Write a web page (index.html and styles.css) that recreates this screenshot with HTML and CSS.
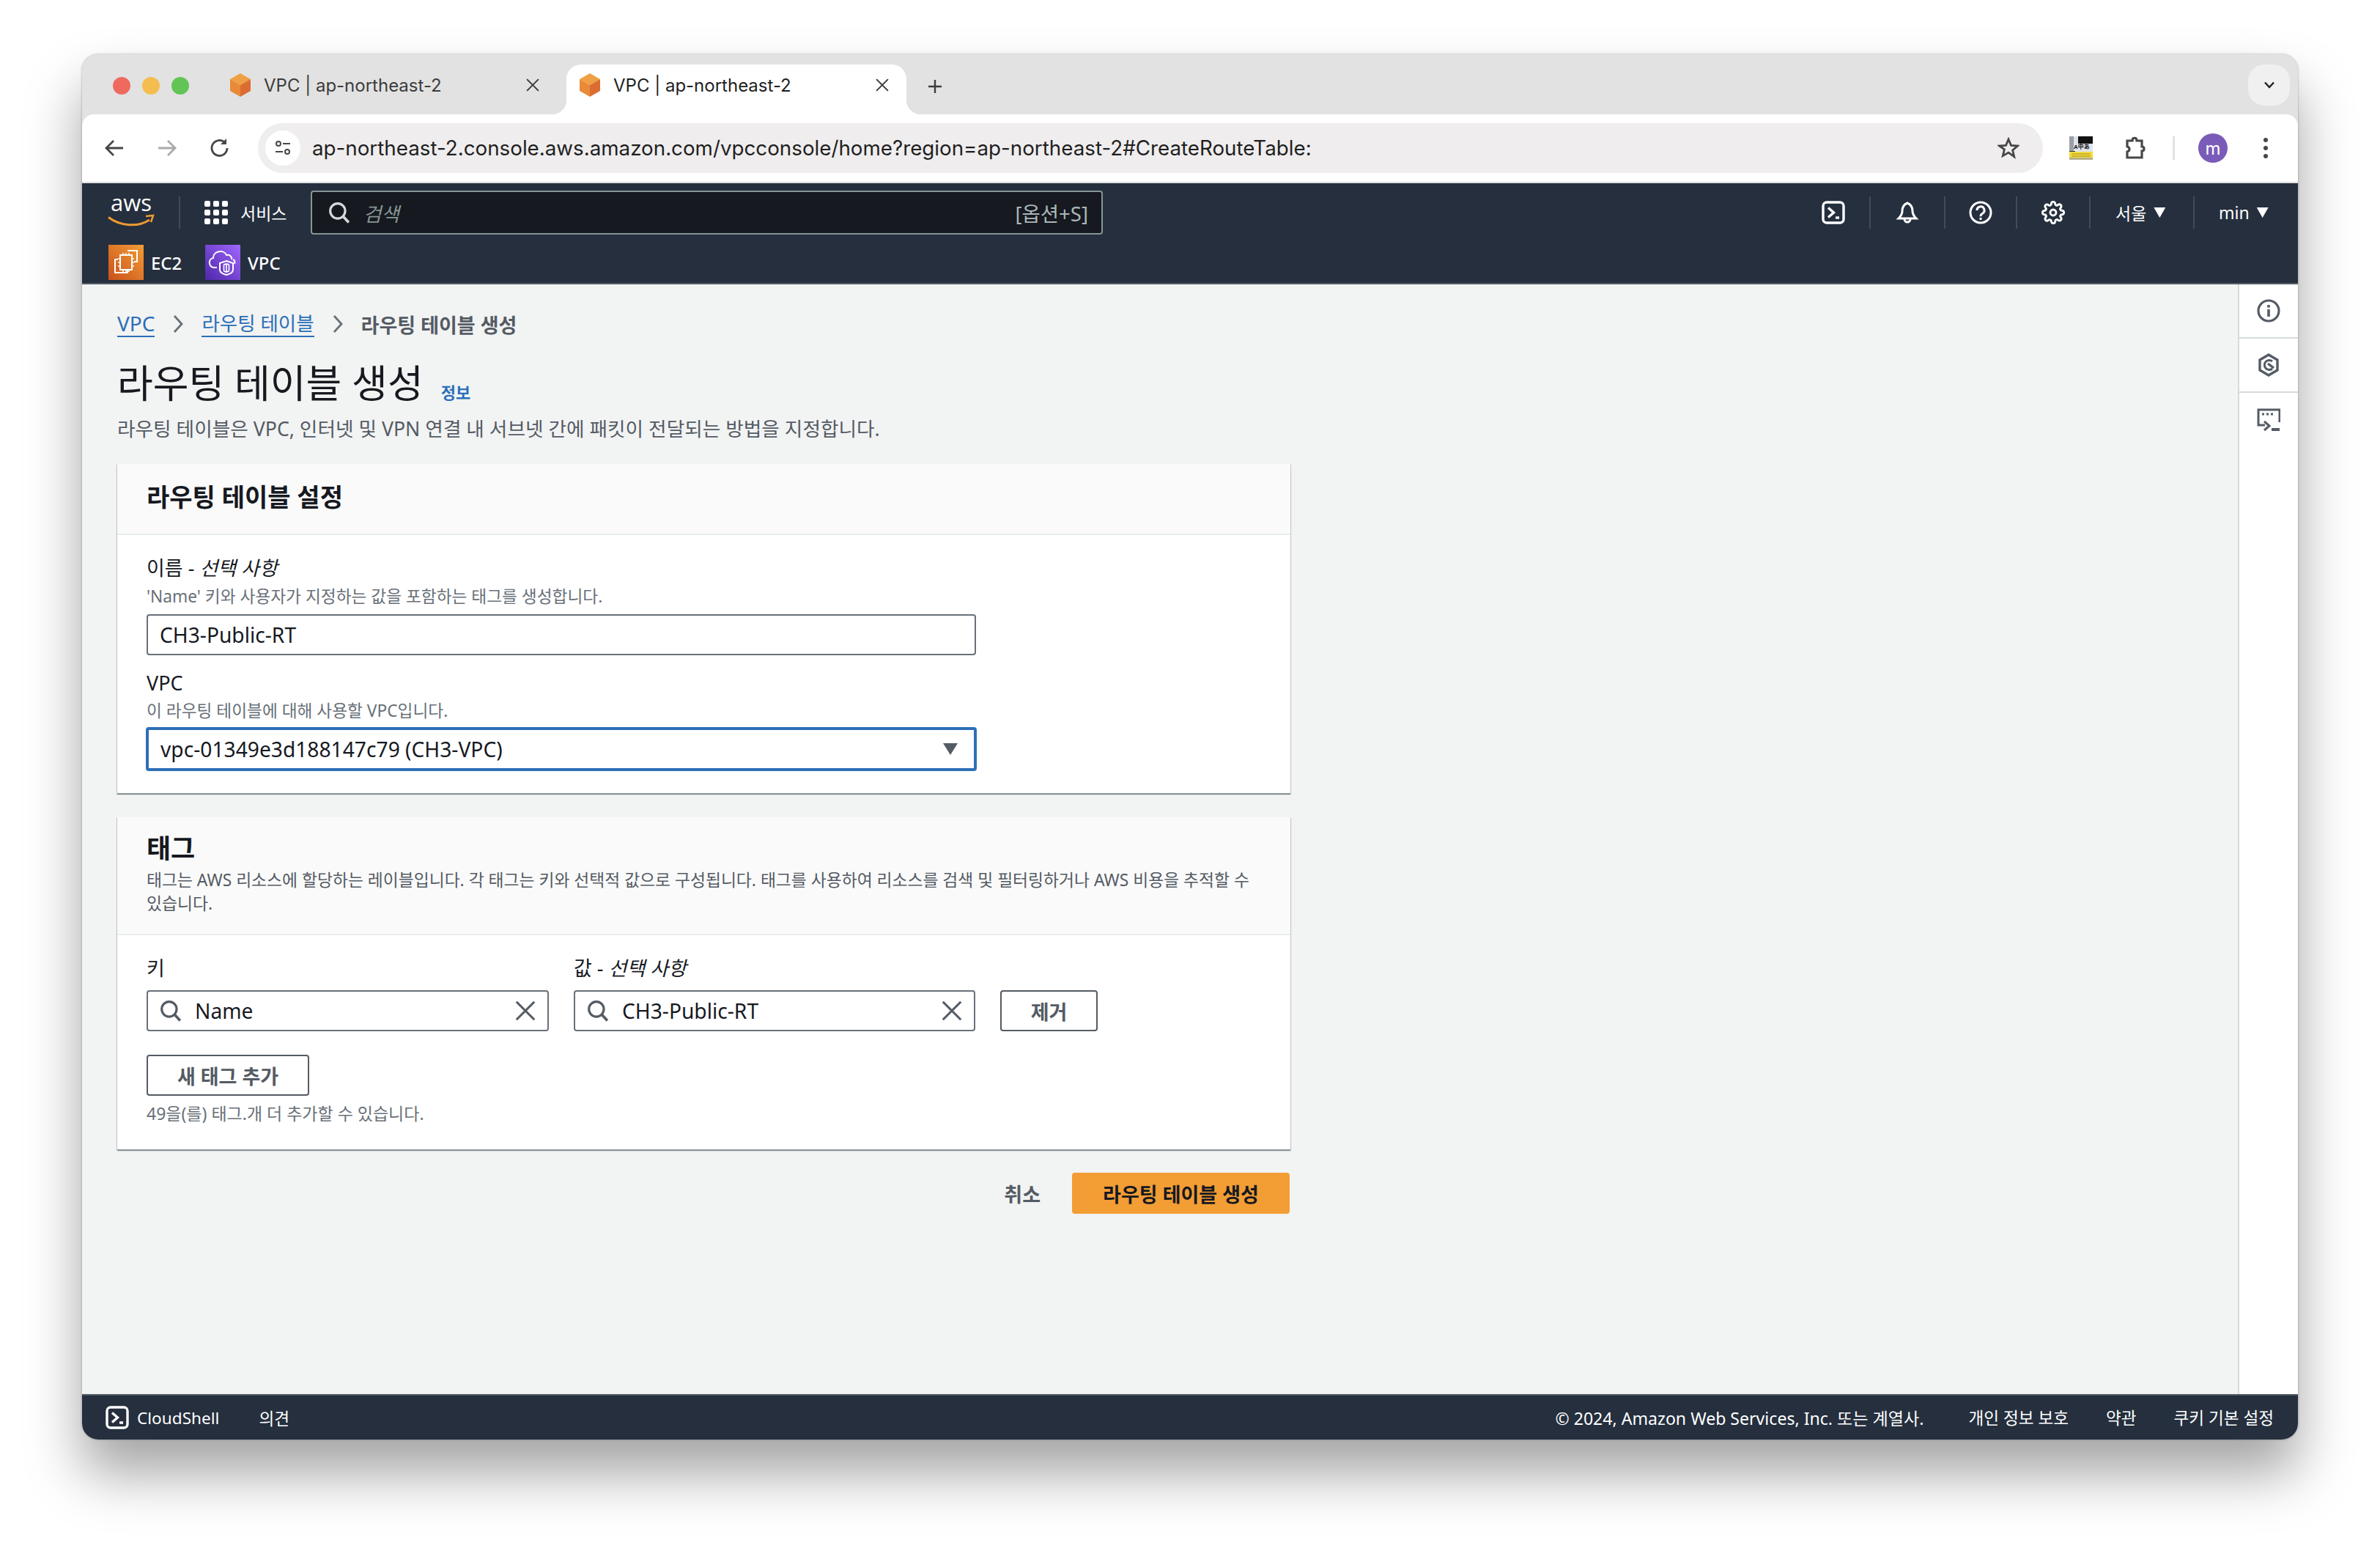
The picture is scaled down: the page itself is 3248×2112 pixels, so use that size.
FILE: index.html
```html
<!DOCTYPE html>
<html lang="ko">
<head>
<meta charset="utf-8">
<title>VPC | ap-northeast-2</title>
<link rel="stylesheet" href="styles.css">
</head>
<body>
<svg class="defs" width="0" height="0" aria-hidden="true">
  <symbol id="cube" viewBox="0 0 28 32"><polygon points="14,0 28,8 14,16 0,8" fill="#efa044"/><polygon points="0,8 14,16 14,32 0,24" fill="#e98a38"/><polygon points="28,8 14,16 14,32 28,24" fill="#dc6d31"/></symbol>
  <symbol id="x" viewBox="0 0 16 16"><path d="M1 1l14 14M15 1L1 15" fill="none" stroke="currentColor" stroke-width="1.800"/></symbol>
  <symbol id="mag" viewBox="0 0 28 28"><circle cx="12" cy="12" r="9.500" fill="none" stroke="currentColor" stroke-width="3"/><path d="M18.500 18.500L26 26.500" stroke="currentColor" stroke-width="3.400" fill="none"/></symbol>
  <symbol id="term" viewBox="0 0 32 32"><rect x="2" y="2" width="28" height="28" rx="5" fill="none" stroke="currentColor" stroke-width="3.400"/><path d="M9 9.500l7.500 6.500-7.500 6.500" fill="none" stroke="currentColor" stroke-width="3.400"/><path d="M19 23h5" stroke="currentColor" stroke-width="3.400"/></symbol>
</svg>
<div class="window">
  <div class="tabstrip">
    <div class="lights"><span class="light red"></span><span class="light yellow"></span><span class="light green"></span></div>
    <div class="tab"><svg class="favicon"><use href="#cube"/></svg><span class="tab-title">VPC | ap-northeast-2</span><svg class="tab-x"><use href="#x"/></svg></div>
    <div class="tab active"><svg class="favicon"><use href="#cube"/></svg><span class="tab-title">VPC | ap-northeast-2</span><svg class="tab-x"><use href="#x"/></svg></div>
    <svg class="plus" viewBox="0 0 20 20"><path d="M10 1v18M1 10h18" stroke="#3c3c3c" stroke-width="2.400"/></svg>
    <div class="tab-menu"><svg viewBox="0 0 16 10" width="16" height="10"><path d="M2 1.500l6 6.500 6-6.500" fill="none" stroke="#1f1f1f" stroke-width="2.400"/></svg></div>
  </div>
  <div class="toolbar">
    <svg class="tb-ic" viewBox="0 0 32 32"><path d="M28 16H6M15 6L5 16l10 10" fill="none" stroke="#474747" stroke-width="2.800"/></svg>
    <svg class="tb-ic" viewBox="0 0 32 32"><path d="M4 16h22M17 6l10 10-10 10" fill="none" stroke="#aaa" stroke-width="2.800"/></svg>
    <svg class="tb-ic" viewBox="0 0 32 32"><path d="M26 16a10.500 10.500 0 1 1-3-7.400" fill="none" stroke="#474747" stroke-width="2.800"/><path d="M25 3v8h-8z" fill="#474747"/></svg>
    <div class="omnibox">
      <div class="site-chip"><svg viewBox="0 0 24 24" width="24" height="24"><circle cx="6" cy="6" r="3" fill="none" stroke="#474747" stroke-width="2"/><path d="M12 6h10M2 17h10" stroke="#474747" stroke-width="2"/><circle cx="18" cy="17" r="3" fill="none" stroke="#474747" stroke-width="2"/></svg></div>
      <div class="url">ap-northeast-2.console.aws.amazon.com/vpcconsole/home?region=ap-northeast-2#CreateRouteTable:</div>
      <svg class="star" viewBox="0 0 30 30"><path d="M15 3l3.500 8.300 9 .700-6.900 5.900 2.100 8.800L15 21.100l-7.700 4.600 2.100-8.800L2.500 12l9-.700z" fill="none" stroke="#474747" stroke-width="2.800"/></svg>
    </div>
    <svg class="ext-img" viewBox="0 0 32 32"><rect width="32" height="32" fill="#dfe4ea"/><rect x="12" width="20" height="10" fill="#111"/><rect y="0" width="6" height="24" fill="#9aa0a6"/><rect y="20" width="8" height="5" fill="#333"/><rect y="21" width="32" height="8" fill="#f5dc3c"/><rect y="29" width="32" height="3" fill="#b5b08a"/><path d="M3 24h26M3 27h26" stroke="#8a7a1c" stroke-width=".800"/><text x="6" y="17" class="ext-text">A中あ</text></svg>
    <svg class="puzzle" viewBox="0 0 32 32"><path d="M6 6h7c0-5 6-5 6 0h7v8c4 0 4 6 0 6v9H6v-8c4-1 4-6 0-7z" fill="none" stroke="#474747" stroke-width="3.200"/></svg>
    <span class="tb-div"></span>
    <span class="avatar">m</span>
    <svg class="dots" viewBox="0 0 8 32"><circle cx="4" cy="5" r="3" fill="#474747"/><circle cx="4" cy="16" r="3" fill="#474747"/><circle cx="4" cy="27" r="3" fill="#474747"/></svg>
  </div>
  <header class="nav">
    <div class="nav-top">
      <svg class="aws-logo" viewBox="0 0 64 38"><text x="32" y="17" class="aws-text">aws</text><path d="M1 25.500c16 12 40 14 56 3.500" fill="none" stroke="#ee9a33" stroke-width="3"/><path d="M52 24l10-1-3 9" fill="none" stroke="#ee9a33" stroke-width="2.500"/></svg>
      <span class="nav-div"></span>
      <svg class="grid" viewBox="0 0 32 32"><g fill="#fff"><rect x="0" y="0" width="8" height="8" rx="2"/><rect x="12" y="0" width="8" height="8" rx="2"/><rect x="24" y="0" width="8" height="8" rx="2"/><rect x="0" y="12" width="8" height="8" rx="2"/><rect x="12" y="12" width="8" height="8" rx="2"/><rect x="24" y="12" width="8" height="8" rx="2"/><rect x="0" y="24" width="8" height="8" rx="2"/><rect x="12" y="24" width="8" height="8" rx="2"/><rect x="24" y="24" width="8" height="8" rx="2"/></g></svg>
      <span class="nav-services">서비스</span>
      <div class="search"><svg class="search-ic"><use href="#mag"/></svg><span class="search-ph">검색</span><span class="search-key">[옵션+S]</span></div>
      <div class="nav-right">
        <div class="cell c1"><svg class="nav-ic"><use href="#term"/></svg></div>
        <div class="cell c2"><svg class="nav-ic" viewBox="0 0 32 32"><path d="M16 3c5 2 7 5 7 11 0 4 2 7 5 10H4c3-3 5-6 5-10 0-6 2-9 7-11z" fill="none" stroke="#fff" stroke-width="3"/><path d="M12 25a4 4 0 0 0 8 0" fill="none" stroke="#fff" stroke-width="3"/></svg></div>
        <div class="cell c3"><svg class="nav-ic" viewBox="0 0 32 32"><circle cx="16" cy="16" r="14" fill="none" stroke="#fff" stroke-width="3"/><path d="M11 13a5 5 0 1 1 7.500 4.200c-1.800 1-2.500 2-2.500 4" fill="none" stroke="#fff" stroke-width="3"/><rect x="14.500" y="23" width="3" height="3" fill="#fff"/></svg></div>
        <div class="cell c4"><svg class="nav-ic" viewBox="0 0 24 24"><circle cx="12" cy="12" r="3" fill="none" stroke="#fff" stroke-width="2.200"/><path d="M19.400 15a1.650 1.650 0 0 0 .33 1.820l.06.06a2 2 0 0 1 0 2.830 2 2 0 0 1-2.830 0l-.06-.06a1.650 1.650 0 0 0-1.820-.33 1.650 1.650 0 0 0-1 1.510V21a2 2 0 0 1-2 2 2 2 0 0 1-2-2v-.09A1.650 1.650 0 0 0 9 19.400a1.650 1.650 0 0 0-1.820.33l-.06.06a2 2 0 0 1-2.830 0 2 2 0 0 1 0-2.830l.06-.06a1.650 1.650 0 0 0 .33-1.820 1.650 1.650 0 0 0-1.510-1H3a2 2 0 0 1-2-2 2 2 0 0 1 2-2h.09A1.650 1.650 0 0 0 4.600 9a1.650 1.650 0 0 0-.33-1.820l-.06-.06a2 2 0 0 1 0-2.830 2 2 0 0 1 2.830 0l.06.06a1.650 1.650 0 0 0 1.820.33H9a1.650 1.650 0 0 0 1-1.510V3a2 2 0 0 1 2-2 2 2 0 0 1 2 2v.09a1.650 1.650 0 0 0 1 1.510 1.650 1.650 0 0 0 1.820-.33l.06-.06a2 2 0 0 1 2.830 0 2 2 0 0 1 0 2.830l-.06.06a1.650 1.650 0 0 0-.33 1.820V9a1.650 1.650 0 0 0 1.510 1H21a2 2 0 0 1 2 2 2 2 0 0 1-2 2h-.09a1.650 1.650 0 0 0-1.510 1z" fill="none" stroke="#fff" stroke-width="2.200"/></svg></div>
        <div class="cell c5"><span>서울</span><i class="tri"></i></div>
        <div class="cell c6"><span>min</span><i class="tri"></i></div>
      </div>
    </div>
    <div class="nav-bottom">
      <svg class="svc" viewBox="0 0 48 48"><defs><linearGradient id="g-ec2" x1="0" y1="1" x2="1" y2="0"><stop offset="0" stop-color="#c8511b"/><stop offset="1" stop-color="#f49d35"/></linearGradient></defs><rect width="48" height="48" fill="url(#g-ec2)"/><path d="M26 8h13v15h-4M13 20H9v18h17v-4" fill="none" stroke="#fff" stroke-width="2"/><rect x="16" y="14" width="16" height="20" fill="none" stroke="#fff" stroke-width="2"/><path d="M20 11v3M24 11v3M28 11v3M20 34v3M24 34v3M28 34v3M13 19h3M13 24h3M13 29h3M32 19h3M32 24h3M32 29h3" stroke="#fff" stroke-width="1.500"/></svg>
      <span class="svc-name first">EC2</span>
      <svg class="svc" viewBox="0 0 48 48"><defs><linearGradient id="g-vpc" x1="0" y1="1" x2="1" y2="0"><stop offset="0" stop-color="#4d27a8"/><stop offset="1" stop-color="#a166ff"/></linearGradient></defs><rect width="48" height="48" fill="url(#g-vpc)"/><path d="M16 31h-4C4 30 4 19 11 18c0-10 15-12 18-4 5-1 8 3 7 6M38 20c2 1 3 3 2 6" fill="none" stroke="#fff" stroke-width="2"/><path d="M29 22l9 3v9c0 4-5 6-9 7-4-1-9-3-9-7v-9z" fill="none" stroke="#fff" stroke-width="2"/><path d="M29 26v12M25.500 28v7c0 2.500 7 2.500 7 0v-7c0-2.500-7-2.500-7 0z" fill="none" stroke="#fff" stroke-width="1.600"/></svg>
      <span class="svc-name">VPC</span>
    </div>
  </header>
  <div class="main">
    <main class="content">
      <nav class="crumbs">
        <a class="crumb-link crumb-root">VPC</a>
        <svg class="chev" viewBox="0 0 14 24"><path d="M2 1l10 11L2 23" fill="none" stroke="#687078" stroke-width="2.800"/></svg>
        <a class="crumb-link">라우팅 테이블</a>
        <svg class="chev" viewBox="0 0 14 24"><path d="M2 1l10 11L2 23" fill="none" stroke="#687078" stroke-width="2.800"/></svg>
        <span class="crumb-cur">라우팅 테이블 생성</span>
      </nav>
      <div class="title-row"><h1 class="title">라우팅 테이블 생성</h1><a class="info-link">정보</a></div>
      <p class="subtitle">라우팅 테이블은 VPC, 인터넷 및 VPN 연결 내 서브넷 간에 패킷이 전달되는 방법을 지정합니다.</p>

      <section class="card card-one">
        <div class="card-head"><h2 class="card-title">라우팅 테이블 설정</h2></div>
        <div class="card-body body-one">
          <div class="label">이름 - <em>선택 사항</em></div>
          <div class="desc">'Name' 키와 사용자가 지정하는 값을 포함하는 태그를 생성합니다.</div>
          <div class="field name-field">CH3-Public-RT</div>
          <div class="label vpc-label">VPC</div>
          <div class="desc vpc-desc">이 라우팅 테이블에 대해 사용할 VPC입니다.</div>
          <div class="field select-field"><span>vpc-01349e3d188147c79 (CH3-VPC)</span><i class="select-tri"></i></div>
        </div>
      </section>

      <section class="card card-two">
        <div class="card-head head-two">
          <h2 class="card-title tag-title">태그</h2>
          <p class="tag-desc">태그는 AWS 리소스에 할당하는 레이블입니다. 각 태그는 키와 선택적 값으로 구성됩니다. 태그를 사용하여 리소스를 검색 및 필터링하거나 AWS 비용을 추적할 수 있습니다.</p>
        </div>
        <div class="card-body body-two">
          <div class="tag-grid">
            <div class="label">키</div>
            <div class="label">값 - <em>선택 사항</em></div>
            <div></div>
            <div class="field tag-field"><svg class="tag-mag"><use href="#mag"/></svg><span class="tag-val">Name</span><svg class="tag-x"><use href="#x"/></svg></div>
            <div class="field tag-field"><svg class="tag-mag"><use href="#mag"/></svg><span class="tag-val">CH3-Public-RT</span><svg class="tag-x"><use href="#x"/></svg></div>
            <button class="btn">제거</button>
          </div>
          <button class="btn btn-add">새 태그 추가</button>
          <div class="desc hint">49을(를) 태그.개 더 추가할 수 있습니다.</div>
        </div>
      </section>

      <div class="actions"><span class="cancel">취소</span><button class="primary">라우팅 테이블 생성</button></div>
    </main>
    <aside class="rail">
      <div class="rail-item"><svg class="rail-ic" viewBox="0 0 32 32"><circle cx="16" cy="16" r="14" fill="none" stroke="#545b64" stroke-width="3.200"/><path d="M16 14v10" stroke="#545b64" stroke-width="3.600"/><rect x="14.200" y="8" width="3.600" height="3.600" fill="#545b64"/></svg></div>
      <div class="rail-item"><svg class="rail-ic" viewBox="0 0 32 32"><path d="M16 2l12 7v14l-12 7-12-7V9z" fill="none" stroke="#545b64" stroke-width="3.400"/><path d="M21 11a6.500 6.500 0 1 0 0 10" fill="none" stroke="#545b64" stroke-width="3"/><path d="M15 14l8 6" stroke="#545b64" stroke-width="3.400"/></svg></div>
      <div class="rail-item"><svg class="rail-ic" viewBox="0 0 32 32"><path d="M11 23H2V2h29v17" fill="none" stroke="#545b64" stroke-width="3"/><path d="M7 8h3M13 8h3M19 8h3" stroke="#545b64" stroke-width="3"/><path d="M10 18l7 6-7 6" fill="none" stroke="#545b64" stroke-width="3"/><path d="M20 29h11" stroke="#545b64" stroke-width="4"/></svg></div>
    </aside>
  </div>
  <footer class="footer">
    <svg class="foot-ic"><use href="#term"/></svg>
    <span class="foot-cs">CloudShell</span>
    <span class="foot-fb">의견</span>
    <div class="foot-right"><span class="foot-copy">© 2024, Amazon Web Services, Inc. 또는 계열사.</span><span>개인 정보 보호</span><span>약관</span><span>쿠키 기본 설정</span></div>
  </footer>
</div>
</body>
</html>
```

FILE: styles.css
```css
* { box-sizing: border-box; }
html, body { margin: 0; height: 2112px; overflow: hidden; }
body {
  padding: 74px 112px 0;
  background: #fff;
  font-family: "Noto Sans", "Noto Sans CJK KR", sans-serif;
  color: #16191f;
}
.defs { position: absolute; }
.window {
  width: 3024px;
  height: 1890px;
  display: flex;
  flex-direction: column;
  background: #e2e2e2;
  border-radius: 22px;
  overflow: hidden;
  box-shadow: 0 46px 76px rgba(0, 0, 0, .36), 0 0 3px rgba(0, 0, 0, .3);
}

/* tab strip */
.tabstrip { height: 82px; flex: none; display: flex; align-items: flex-end; }
.lights { display: flex; gap: 16px; align-self: flex-start; margin: 31px 38px 0 42px; }
.light { width: 24px; height: 24px; border-radius: 50%; }
.red { background: #ee6a5f; }
.yellow { background: #f5bd4f; }
.green { background: #61c454; }
.tab {
  width: 464px; height: 68px; margin-right: 13px; padding: 0 24px 12px 18px;
  display: flex; align-items: center; position: relative;
  color: #3c3c3c;
  font: 24px Inter, "Liberation Sans", sans-serif;
}
.tab.active { background: #fff; border-radius: 20px 20px 0 0; color: #1f1f1f; }
.tab.active::before, .tab.active::after { content: ""; position: absolute; bottom: 0; width: 20px; height: 20px; }
.tab.active::before { left: -20px; background: radial-gradient(circle at 0 0, transparent 20px, #fff 20.500px); }
.tab.active::after { right: -20px; background: radial-gradient(circle at 100% 0, transparent 20px, #fff 20.500px); }
.favicon { width: 28px; height: 32px; margin-right: 18px; flex: none; }
.tab-title { flex: 1; white-space: nowrap; }
.tab-x { width: 18px; height: 18px; flex: none; color: #3c3c3c; }
.plus { width: 20px; height: 20px; margin: 0 0 28px 16px; flex: none; }
.tab-menu {
  width: 57px; height: 56px; margin: 0 11px 12px auto; align-self: flex-end;
  display: flex; align-items: center; justify-content: center;
  background: #f0f0f0; border-radius: 22px;
}

/* toolbar */
.toolbar {
  height: 94px; flex: none; padding-left: 28px; display: flex; align-items: center;
  background: #fff; border-bottom: 2px solid #e2e2e2; border-radius: 16px 16px 0 0;
}
.tb-ic { width: 32px; height: 32px; margin-right: 40px; flex: none; }
.omnibox {
  width: 2436px; height: 68px; margin-left: -4px; padding: 0 32px 0 10px; flex: none;
  display: flex; align-items: center;
  background: #efedee; border-radius: 34px;
}
.site-chip { width: 48px; height: 48px; flex: none; display: flex; align-items: center; justify-content: center; background: #fff; border-radius: 50%; }
.url { flex: 1; margin-left: 16px; font: 27.750px Inter, "Liberation Sans", sans-serif; color: #1f1f1f; white-space: nowrap; }
.star { width: 30px; height: 30px; flex: none; }
.ext-img { width: 32px; height: 32px; margin-left: 36px; flex: none; }
.ext-text { font: bold 8px "Liberation Sans", "Noto Sans CJK KR", sans-serif; fill: #111; }
.puzzle { width: 32px; height: 32px; margin-left: 41px; flex: none; }
.tb-div { width: 3px; height: 32px; margin-left: 36px; background: #e2e2e2; flex: none; }
.avatar {
  width: 40px; height: 40px; margin-left: 32px; flex: none; border-radius: 50%;
  background: #7a5cb8; color: #fff; display: flex; align-items: center; justify-content: center;
  font: 24px Inter, "Liberation Sans", sans-serif;
}
.dots { width: 8px; height: 32px; margin-left: 48px; flex: none; }

/* nav */
.nav { height: 138px; flex: none; background: #252f3e; border-bottom: 2px solid #545b64; color: #fff; padding-top: 10px; }
.nav-top { height: 60px; display: flex; align-items: center; padding-left: 35px; }
.aws-logo { width: 64px; height: 38px; flex: none; overflow: visible; }
.aws-text { font: 31px "Open Sans", sans-serif; fill: #fff; text-anchor: middle; }
.nav-div { width: 2px; height: 44px; margin-left: 33px; background: #414b59; flex: none; }
.grid { width: 32px; height: 32px; margin-left: 33px; flex: none; }
.nav-services { width: 60px; margin-left: 17px; font-size: 23px; white-space: nowrap; flex: none; }
.search {
  width: 1081px; height: 60px; margin-left: 36px; padding: 0 18px 0 22px; flex: none;
  display: flex; align-items: center;
  background: #16191f; border: 2px solid #879596; border-radius: 4px;
}
.search-ic { width: 30px; height: 30px; color: #d5dbdb; flex: none; }
.search-ph { margin-left: 18px; font-size: 26.500px; font-style: italic; color: #879596; flex: 1; }
.search-key { font-size: 27.500px; color: #aab7b8; }
.nav-right { margin-left: auto; display: flex; align-items: center; }
.cell { height: 44px; display: flex; align-items: center; justify-content: center; border-left: 2px solid #414b59; font-size: 23px; }
.c1 { width: 98px; border-left: 0; }
.c2 { width: 102px; }
.c3 { width: 98px; }
.c4 { width: 100px; }
.c5 { width: 142px; justify-content: flex-start; padding-left: 34px; }
.c6 { width: 143px; justify-content: flex-start; padding-left: 33px; }
.nav-ic { width: 32px; height: 32px; color: #fff; }
.tri { width: 16px; height: 14px; margin-left: 10px; background: #fff; clip-path: polygon(0 0, 100% 0, 50% 100%); }
.nav-bottom { height: 48px; margin-top: 14px; display: flex; align-items: center; padding-left: 36px; }
.svc { width: 48px; height: 48px; flex: none; }
.svc-name { margin-left: 10px; font-size: 24px; font-weight: 500; }
.svc-name.first { width: 74px; }

/* main */
.main { flex: 1; min-height: 0; display: flex; background: #f2f3f3; }
.content { flex: 1; padding: 36px 0 0 48px; }
.crumbs { height: 36px; display: flex; align-items: center; font-size: 26.500px; }
.crumb-link { color: #2b6fb8; border-bottom: 2px solid #2b6fb8; line-height: 34px; height: 36px; }
.crumb-root { font-size: 28px; }
.crumb-cur { color: #545b64; font-weight: 700; font-size: 27px; }
.chev { width: 14px; height: 24px; margin: 0 25px; flex: none; }
.title-row { height: 68px; margin-top: 29px; display: flex; align-items: center; }
.title { margin: 0; font-size: 53px; font-weight: 400; line-height: 68px; white-space: nowrap; }
.info-link { margin: 24px 0 0 24px; color: #2b6fb8; font-size: 22px; font-weight: 700; line-height: 28px; }
.subtitle { margin: 10px 0 0; font-size: 26.700px; line-height: 36px; color: #545b64; white-space: nowrap; }

.card { width: 1601px; background: #fff; box-shadow: 0 1px 1px 0 rgba(0,28,36,.3), 1px 1px 1px 0 rgba(0,28,36,.15), -1px 1px 1px 0 rgba(0,28,36,.15); border-bottom: 1px solid #9aa5a8; }
.card-one { margin-top: 30px; height: 450px; }
.card-two { margin-top: 32px; height: 454px; }
.card-head { height: 97px; background: #fafafa; border-bottom: 2px solid #eaeded; padding: 25px 40px 0; }
.card-title { margin: 0; font-size: 34px; font-weight: 700; line-height: 40px; }
.tag-title { font-size: 36px; }
.head-two { height: 161px; padding-top: 23px; }
.tag-desc { margin: 7px 0 0; font-size: 22.800px; line-height: 32px; color: #545b64; }
.card-body { padding: 29px 0 0 40px; }
.label { font-size: 27px; line-height: 32px; color: #16191f; }
.label em { font-style: italic; }
.desc { margin-top: 9px; font-size: 22.700px; line-height: 28px; color: #687078; white-space: nowrap; }
.field {
  width: 1132px; height: 56px; margin-top: 10px; padding: 0 16px; display: flex; align-items: center;
  background: #fff; border: 2px solid #687078; border-radius: 4px; font-size: 28.200px; color: #16191f;
}
.vpc-label { margin-top: 22px; }
.vpc-desc { margin-top: 8px; }
.select-field { height: 60px; width: 1134px; margin: 8px 0 0 -1px; border: 4px solid #2e6fb7; padding-right: 22px; justify-content: space-between; }
.select-tri { width: 20px; height: 16px; background: #545b64; clip-path: polygon(0 0, 100% 0, 50% 100%); }
.tag-grid { display: grid; grid-template-columns: 549px 548px 133px; column-gap: 34px; row-gap: 14px; }
.tag-field { width: auto; margin: 0; padding: 0 16px 0 16px; }
.tag-mag { width: 30px; height: 30px; color: #545b64; flex: none; }
.tag-val { margin-left: 18px; flex: 1; }
.tag-x { width: 28px; height: 28px; color: #545b64; flex: none; }
.btn {
  height: 56px; background: #fff; border: 2px solid #545b64; border-radius: 4px; padding: 0;
  font: 700 27px "Noto Sans", "Noto Sans CJK KR", sans-serif; color: #545b64;
}
.btn-add { width: 222px; margin-top: 32px; display: block; }
.hint { margin-top: 10px; font-size: 23px; }
.actions { width: 1600px; margin-top: 31px; display: flex; justify-content: flex-end; align-items: center; }
.cancel { margin-right: 43px; font-size: 27px; font-weight: 700; color: #545b64; }
.primary {
  width: 297px; height: 56px; background: #f39d35; border: 0; border-radius: 4px; padding: 0;
  font: 700 27px "Noto Sans", "Noto Sans CJK KR", sans-serif; color: #16191f;
}

/* rail */
.rail { width: 82px; flex: none; background: #fff; border-left: 2px solid #d5dbdb; }
.rail-item { height: 74px; display: flex; align-items: center; justify-content: center; border-bottom: 2px solid #d5dbdb; }
.rail-item:last-child { border-bottom: 0; }
.rail-ic { width: 32px; height: 32px; }

/* footer */
.footer {
  height: 62px; flex: none; padding: 0 33px 0 32px; display: flex; align-items: center;
  background: #252f3e; border-top: 2px solid #545b64; color: #fff; font-size: 22.600px;
}
.foot-ic { width: 32px; height: 32px; flex: none; color: #fff; }
.foot-cs { margin-left: 11px; }
.foot-fb { margin-left: 54px; }
.foot-right { margin-left: auto; display: flex; gap: 51px; }
.foot-copy { margin-right: 10px; font-size: 23.100px; }
```
